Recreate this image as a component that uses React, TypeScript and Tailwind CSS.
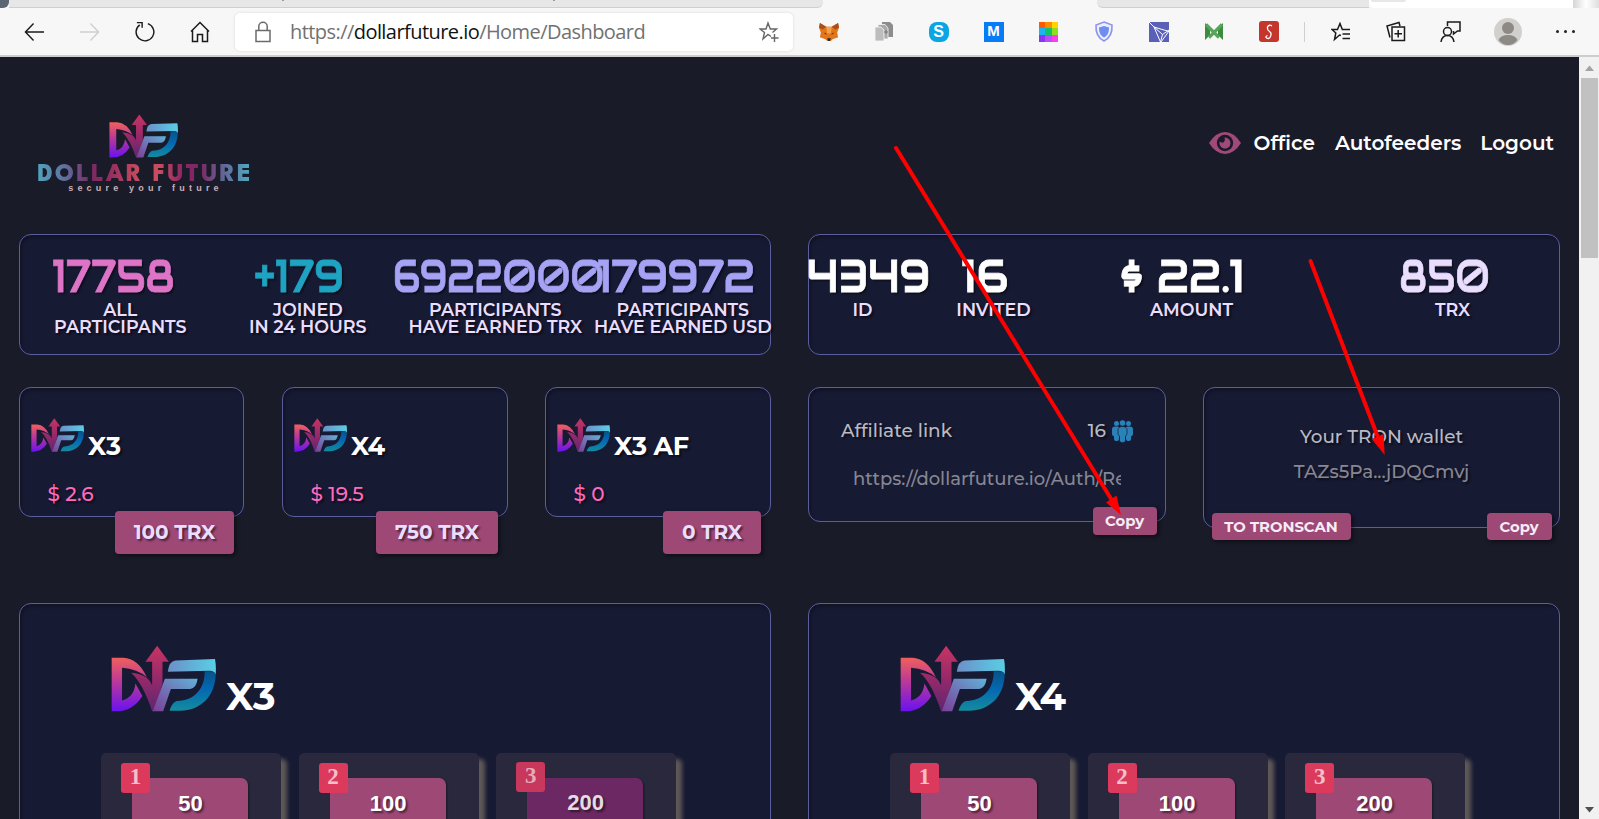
import { useId, type ReactNode } from "react";

const font = "font-['Montserrat','Inter',sans-serif]";
const shadow = "[text-shadow:2px_2px_2px_rgba(0,0,0,0.5)]";
const panel =
  "relative rounded-xl border border-[#5b5e9d] bg-[#171a33] shadow-[inset_2px_3px_3px_rgba(0,0,0,0.25)]";

function Mark({ className }: { className: string }) {
  const id = useId().replace(/:/g, "");
  return (
    <svg viewBox="333 166 314 200" preserveAspectRatio="none" className={className}>
      <defs>
        <linearGradient id={id + "d"} x1="0" y1="0" x2="0" y2="1">
          <stop offset="0" stopColor="#f0605c" />
          <stop offset="0.4" stopColor="#c03c92" />
          <stop offset="1" stopColor="#6a12f0" />
        </linearGradient>
        <linearGradient id={id + "n"} x1="0" y1="0" x2="0" y2="1">
          <stop offset="0" stopColor="#c83462" />
          <stop offset="0.5" stopColor="#96296a" />
          <stop offset="1" stopColor="#5e2670" />
        </linearGradient>
        <linearGradient id={id + "f"} x1="0" y1="1" x2="1" y2="0">
          <stop offset="0" stopColor="#7a3f96" />
          <stop offset="0.45" stopColor="#7270b4" />
          <stop offset="1" stopColor="#5fb2d8" />
        </linearGradient>
        <linearGradient id={id + "t"} x1="0" y1="0" x2="1" y2="0">
          <stop offset="0" stopColor="#6d8fc8" />
          <stop offset="1" stopColor="#58cfe6" />
        </linearGradient>
        <linearGradient id={id + "b"} x1="0" y1="0" x2="0" y2="1">
          <stop offset="0" stopColor="#075288" />
          <stop offset="0.45" stopColor="#0468b2" />
          <stop offset="1" stopColor="#148c9e" />
        </linearGradient>
      </defs>
      <path
        fill={`url(#${id}d)`}
        d="M335 204H370Q414 206 440 262Q412 238 366 234V332Q402 322 406 281L427 318Q398 364 348 364H335Z"
      />
      <path
        fill={`url(#${id}n)`}
        d="M393 249Q420 250 440 264Q450 272 456 286V216H436L471 168L506 216H487V282L462 364H456Q428 280 393 249Z"
      />
      <path fill={`url(#${id}f)`} d="M494 267H592Q588 296 570 297H512L489 364H458Z" />
      <path fill={`url(#${id}t)`} d="M503 246Q506 214 526 212L644 208Q648 228 646 254Q640 243 628 243Z" />
      <path
        fill={`url(#${id}b)`}
        d="M613 244H636Q645 246 646 254C644 320 600 362 540 362H508Q516 336 530 333C586 332 614 292 613 244Z"
      />
    </svg>
  );
}

function Stat({
  value,
  valueClass,
  scale,
  width,
  children,
}: {
  value: string;
  valueClass: string;
  scale: string;
  width: string;
  children: ReactNode;
}) {
  return (
    <div className={`${width} shrink-0 whitespace-nowrap font-semibold`}>
      <div
        className={`flex h-[41px] items-center pb-[2px] font-['Audiowide','Orbitron','Inter',sans-serif] text-[45px] leading-[39px] font-normal [-webkit-text-stroke:0.8px_currentColor] ${shadow} ${valueClass}`}
      >
        <span className={`inline-block ${scale}`}>{value}</span>
      </div>
      <div
        className={`flex flex-col items-center pt-[3px] pl-[13px] text-[17.5px] leading-[17px] text-[#eadeff] ${shadow}`}
      >
        {children}
      </div>
    </div>
  );
}

function Program({
  title,
  amount,
  trx,
  className,
  btn,
}: {
  title: string;
  amount: string;
  trx: string;
  className: string;
  btn: string;
}) {
  return (
    <div className={`${panel} h-[130px] ${className}`}>
      <div className="flex pt-[30px] pl-[11px]">
        <Mark className="h-[34px] w-[53px]" />
        <div className={`mt-[11px] ml-[4px] text-[25.5px] leading-[34px] font-bold tracking-[-0.3px] text-white ${shadow}`}>
          {title}
        </div>
      </div>
      <div className={`mt-[19px] pl-[27.5px] text-[20px] leading-[24px] font-medium text-[#ff69c0] ${shadow}`}>
        {amount}
      </div>
      <div
        className={`absolute top-[123px] flex h-[43px] items-center justify-center rounded-[4px] bg-[#9e4876] pb-[2px] text-[20px] font-bold text-[#eadeff] shadow-[2px_2px_4px_rgba(0,0,0,0.5)] ${shadow} ${btn}`}
      >
        {trx}
      </div>
    </div>
  );
}

function SmallButton({ className, children }: { className: string; children: ReactNode }) {
  return (
    <div
      className={`absolute flex items-center justify-center rounded-[4px] bg-[#9e4876] pr-px text-[14.8px] font-bold whitespace-nowrap text-[#f6ecf4] shadow-[2px_2px_4px_rgba(0,0,0,0.5)] ${className}`}
    >
      {children}
    </div>
  );
}

function Level({ n, price, dim }: { n: number; price: number; dim?: boolean }) {
  return (
    <div className="relative h-[120px] w-[180px] rounded-[5px] bg-[#29283d] pt-[25px] pl-[31px] shadow-[6px_6px_4px_#5e5957]">
      <div
        className={`h-[90px] w-[116px] rounded-[7px] pl-px text-center font-['Liberation_Sans',Arial,sans-serif] text-[22px] font-bold shadow-[1px_1px_2px_rgba(0,0,0,0.4)] ${shadow} ${
          dim ? "bg-[#6b2862] pt-[8px] leading-[33px] text-[#e2dde2]" : "bg-[#9e4876] pt-[9px] leading-[33px] text-white"
        }`}
      >
        {price}
      </div>
      <div
        className={`absolute left-[20px] flex h-[30px] w-[29px] items-center justify-center rounded-[3px] pb-px font-['Liberation_Serif','Times_New_Roman',serif] text-[23px] font-bold ${
          dim ? "top-[9px] bg-[#c7385c] text-[#e5aab8]" : "top-[10px] bg-[#dc3a5c] text-[#f3c0ca]"
        }`}
      >
        {n}
      </div>
    </div>
  );
}

function Matrix({ title, dimLast, className = "" }: { title: string; dimLast?: boolean; className?: string }) {
  return (
    <div className={`${panel} h-[300px] w-[752px] ${className}`}>
      <div className="flex pt-[41px] pl-[91px]">
        <Mark className="h-[67px] w-[105px]" />
        <div className="mt-[24px] ml-[10px] text-[38.5px] leading-[56px] font-bold tracking-[-0.8px] text-white">{title}</div>
      </div>
      <div className="mt-[28px] flex gap-[17.6px] pl-[81px]">
        <Level n={1} price={50} />
        <Level n={2} price={100} />
        <Level n={3} price={200} dim={dimLast} />
      </div>
    </div>
  );
}

function Slot({ children, className = "w-[55px]" }: { children: ReactNode; className?: string }) {
  return <div className={`flex h-full shrink-0 items-center justify-center ${className}`}>{children}</div>;
}

function BrowserBar() {
  return (
    <div className="h-[57px]">
      <div className="flex h-2 bg-[#f7f7f7]">
        <div className="w-[9px] rounded-br-[6px] bg-[#5c6573]" />
        <div className="flex w-[814px] justify-between rounded-br-[6px] border-b border-[#cfcfcf] bg-[#e7e7e7] pr-[268px] pl-[273px]">
          <div className="h-px w-[2px] bg-[#999]" />
          <div className="h-px w-[2px] bg-[#999]" />
        </div>
        <div className="w-[274px]" />
        <div className="w-[272px] rounded-bl-[6px] border-b border-[#cfcfcf] bg-[#e7e7e7]" />
        <div className="w-[204px] rounded-bl-[6px] bg-white pl-[2px]">
          <div className="h-[2px] w-[35px] rounded-b-[2px] bg-[#e7e7e7]" />
        </div>
        <div className="flex-1 bg-gradient-to-r from-[#d5d5d5] via-white to-[#dedede]" />
      </div>
      <div className="flex h-[49px] items-center border-b-2 border-[#cdcdcd] bg-[#f7f7f7]">
        <Slot className="ml-[7px] w-[55px]">
          <svg width="21" height="20" viewBox="0 0 22 20" fill="none" stroke="#1b1b1b" strokeWidth="1.5">
            <path d="M21 10H1.5M10 1L1.5 10L10 19" />
          </svg>
        </Slot>
        <Slot>
          <svg width="21" height="20" viewBox="0 0 22 20" fill="none" stroke="#cfcfcf" strokeWidth="1.5">
            <path d="M1 10H20.5M12 1L20.5 10L12 19" />
          </svg>
        </Slot>
        <Slot>
          <svg width="21" height="22" viewBox="0 0 22 22" fill="none" stroke="#1b1b1b" strokeWidth="1.5">
            <path d="M14.5 2.2A9.3 9.3 0 1 1 6 3.5M3 1.2H8.5V6.5" />
          </svg>
        </Slot>
        <Slot>
          <svg width="20" height="22" viewBox="0 0 20 22" fill="none" stroke="#1b1b1b" strokeWidth="1.5">
            <path d="M1 10.5L10 1.5L19 10.5M2.5 9.5V20.5H7.5V13.5H12.5V20.5H17.5V9.5" />
          </svg>
        </Slot>
        <div className="ml-[8px] flex h-[38px] w-[558px] shrink-0 items-center rounded-[5px] bg-white pr-[14px] pl-[20px] shadow-[0_0_3px_rgba(0,0,0,0.12)]">
          <svg width="16" height="22" viewBox="0 0 16 22" fill="none" stroke="#6b6b6b" strokeWidth="1.5">
            <path d="M1 9.5H15V20.5H1ZM3.8 9.5V5.5A4.2 4.2 0 0 1 12.2 5.5V9.5" />
          </svg>
          <div className="ml-[19px] font-['Segoe_UI','Open_Sans',sans-serif] text-[20px] tracking-[-0.56px] whitespace-nowrap text-[#717171]">
            https://<span className="text-[#111]">dollarfuture.io</span>/Home/Dashboard
          </div>
          <svg className="ml-auto" width="20" height="22" viewBox="0 0 20 22" fill="none" stroke="#666" strokeWidth="1.4">
            <path d="M12 15.5L9 13.5L4 18L5.5 11.5L1 8H7L9 2L11.3 8H17.5L13.5 11.5M15.5 13V21M12 17H19.5" />
          </svg>
        </div>
        <Slot className="ml-[8px] w-[55px]">
          <svg width="20" height="20" viewBox="0 0 22 21" preserveAspectRatio="none">
            <path fill="#e2761b" d="M1 1L8 5H14L21 1L22 6L20 11L21 16L15 18L13 20H9L7 18L1 16L2 11L0 6Z" />
            <path fill="#a8501a" d="M1 1L8 5L4 8L0 6ZM21 1L14 5L18 8L22 6Z" />
            <path fill="#f6a04c" d="M8 5H14L13 12H9Z" />
            <path fill="#1f2a35" d="M5 11L8 12L8 13.5ZM17 11L14 12V13.5ZM9 17H13L12 20H10Z" />
          </svg>
        </Slot>
        <Slot>
          <svg width="20" height="21" viewBox="0 0 20 21">
            <path fill="#8d8d8d" d="M8 1H16L19 4V16H8Z" />
            <path fill="#a9a9a9" stroke="#f7f7f7" strokeWidth=".8" d="M4 3.5H11L14 7V18H4Z" />
            <path fill="#bdbdbd" stroke="#f7f7f7" strokeWidth=".8" d="M1 6H7L10 9V20H1Z" />
            <path stroke="#777" d="M10 11H14M12 9V13" />
          </svg>
        </Slot>
        <Slot>
          <div className="flex h-[20px] w-[20px] items-center justify-center rounded-[8px] bg-[#0aa5e4] font-['Liberation_Sans',sans-serif] text-[16px] font-bold text-white">
            S
          </div>
        </Slot>
        <Slot>
          <div className="flex h-[20px] w-[20px] items-center justify-center bg-[#067df7] font-['Liberation_Sans',sans-serif] text-[15px] font-bold text-white">
            M
          </div>
        </Slot>
        <Slot>
          <div className="grid h-[20px] w-[20px] grid-cols-3">
            <i className="bg-[#ff5a00]" />
            <i className="bg-[#ff8c00]" />
            <i className="bg-[#ffd200]" />
            <i className="bg-[#1fb4f0]" />
            <i className="bg-[#10c268]" />
            <i className="bg-[#8fe01c]" />
            <i className="bg-[#8a35f5]" />
            <i className="bg-[#b84cf5]" />
            <i className="bg-[#f93fe8]" />
          </div>
        </Slot>
        <Slot>
          <svg width="20" height="21" viewBox="0 0 20 21">
            <path d="M10 1L18 4C18.5 12 16 17 10 20C4 17 1.5 12 2 4Z" fill="#eef" stroke="#8f93f0" strokeWidth="1.6" />
            <path d="M10 5L15 6.5C15 12 13.5 14.5 10 16.5C6.5 14.5 5 12 5 6.5Z" fill="#6d8eee" />
          </svg>
        </Slot>
        <Slot>
          <svg width="20" height="20" viewBox="0 0 20 20">
            <path fill="#5a60b8" d="M0 0H20V20H0Z" />
            <path d="M5 5L20 9.5M5 5L11.5 20M5 5L13.5 12.5L20 8M13.5 12.5L11.5 20M0 0L5 5M20 9L12 20" fill="none" stroke="#fff" strokeWidth="1" />
          </svg>
        </Slot>
        <Slot>
          <svg width="18" height="17" viewBox="0 0 18 17">
            <path fill="#3d8b40" d="M0 0L5 5V12L0 17ZM18 0L13 5V12L18 17Z" />
            <path d="M1 1.5L14 14.5M17 1.5L4 14.5" fill="none" stroke="#58a55a" strokeWidth="3.2" />
          </svg>
        </Slot>
        <Slot>
          <div className="flex h-[21px] w-[20px] items-center justify-center rounded-[3px] bg-[#c4352b]">
            <svg width="10" height="16" viewBox="0 0 10 16" fill="none" stroke="#fff" strokeWidth="1.3">
              <path d="M8 2Q5 0 3.5 3Q3 6 5.5 7.5Q8 9 6.5 12.5Q5 15.5 2.5 14Q1 12.5 3.5 11.5" />
            </svg>
          </div>
        </Slot>
        <Slot className="w-[17px]">
          <div className="h-[20px] w-px bg-[#cfcfcf]" />
        </Slot>
        <Slot>
          <svg width="20" height="20" viewBox="0 0 20 20" fill="none" stroke="#1b1b1b" strokeWidth="1.5">
            <path d="M10 13.5L8.5 13L3.5 17.5L4.8 11L1 7.5H6.5L9 1.5L11.3 7.5H19M11.5 12H19M11.5 16.5H19" />
          </svg>
        </Slot>
        <Slot>
          <svg width="20" height="21" viewBox="0 0 20 21" fill="none" stroke="#1b1b1b" strokeWidth="1.5">
            <path d="M6 6H18.5V19.5H6ZM12.2 9V16.5M8.5 12.7H16M4 16.5L1 5L13 1.5L14 5" />
          </svg>
        </Slot>
        <Slot>
          <svg width="21" height="22" viewBox="0 0 21 22" fill="none" stroke="#1b1b1b" strokeWidth="1.5">
            <path d="M7.5 5V1H20V10H17.5L13.5 13V10" />
            <circle cx="7.5" cy="10.5" r="4" />
            <path d="M1 21Q2 14.5 7.5 14.5Q13 14.5 14 21" />
          </svg>
        </Slot>
        <Slot className="w-[60px]">
          <svg width="28" height="28" viewBox="0 0 28 28">
            <circle cx="14" cy="14" r="14" fill="#d2d0cc" />
            <circle cx="14" cy="10" r="6" fill="#8d8985" />
            <path fill="#8d8985" d="M4.5 22Q7 17 14 17Q21 17 23.5 22Q20 27 14 27Q8 27 4.5 22Z" />
          </svg>
        </Slot>
        <Slot>
          <div className="flex gap-[5px]">
            <i className="h-[3px] w-[3px] rounded-full bg-[#222]" />
            <i className="h-[3px] w-[3px] rounded-full bg-[#222]" />
            <i className="h-[3px] w-[3px] rounded-full bg-[#222]" />
          </div>
        </Slot>
      </div>
    </div>
  );
}

export default function App() {
  return (
    <div className={`relative h-[819px] w-[1599px] overflow-hidden bg-[#1a1b29] ${font}`}>
      <BrowserBar />
      <div className="flex h-[762px]">
        <div className="h-full w-[1579px] overflow-hidden">
          <header className="flex h-[177px] items-start justify-between pr-[25px] pl-[37px]">
            <div className="flex w-[214px] flex-col items-center pt-[57px]">
              <Mark className="-ml-px h-[44px] w-[69px]" />
              <div className="mt-[5px] bg-clip-text pl-[2px] font-['League_Spartan','Lato',sans-serif] text-[25.5px] leading-[24px] font-extrabold tracking-[2.1px] whitespace-nowrap text-transparent [background-image:linear-gradient(90deg,#4fa8c0_0%,#5f6f9d_14%,#7a2a64_25%,#8a2a60_32%,#c94c5e_48%,#c94c5e_57%,#8a2463_68%,#7a2a64_76%,#5f6f9d_88%,#4fa8c0_98%)]">
                DOLLAR FUTURE
              </div>
              <div className="-mt-[4px] pl-[3px] font-['Liberation_Sans',sans-serif] text-[9px] leading-[10px] font-bold tracking-[4.2px] whitespace-nowrap text-[#c9b0b8]">
                secure your future
              </div>
            </div>
            <nav className="flex items-center pt-[72px] text-[20px] leading-[28px] font-semibold text-white">
              <svg width="32" height="22" viewBox="0 0 32 22">
                <path fill="#a14a79" d="M0 11Q7 0 16 0Q25 0 32 11Q25 22 16 22Q7 22 0 11Z" />
                <circle cx="16" cy="11" r="8.2" fill="#1a1b29" />
                <path fill="#a14a79" d="M15.5 5.5A5.5 5.5 0 1 1 10.7 9.5Q13 11.5 15 10Q16.5 8 15.5 5.5Z" />
              </svg>
              <span className="ml-[12.5px]">Office</span>
              <span className="ml-[20px]">Autofeeders</span>
              <span className="ml-[19px]">Logout</span>
            </nav>
          </header>

          <section className="flex gap-[37px] pl-[19px]">
            <div className={`${panel} flex h-[121px] w-[752px] pt-[22px]`}>
              <Stat width="w-[187.5px]" value="17758" scale="scale-x-[0.87]" valueClass="justify-center text-[#de74c7]">
                <span>ALL</span>
                <span>PARTICIPANTS</span>
              </Stat>
              <Stat width="w-[187.5px]" value="+179" scale="scale-x-[0.88]" valueClass="justify-center pr-[4px] text-[#1fa3c2]">
                <span>JOINED</span>
                <span>IN 24 HOURS</span>
              </Stat>
              <Stat width="w-[187.5px]" value="6922000" scale="scale-x-[0.815] origin-left -ml-[2px]" valueClass="text-[#a6a3f5]">
                <span>PARTICIPANTS</span>
                <span>HAVE EARNED TRX</span>
              </Stat>
              <Stat width="w-[187.5px]" value="179972" scale="scale-x-[0.92] origin-left" valueClass="pl-[14px] tracking-[-0.5px] text-[#a6a3f5]">
                <span>PARTICIPANTS</span>
                <span>HAVE EARNED USD</span>
              </Stat>
            </div>
            <div className={`${panel} flex h-[121px] w-[752px] pt-[22px]`}>
              <Stat width="w-[94px]" value="4349" scale="scale-x-[0.91] origin-left -ml-[2px]" valueClass="text-white">
                <span>ID</span>
              </Stat>
              <Stat width="w-[168px]" value="16" scale="scale-x-[0.95]" valueClass="justify-center pr-[4px] text-white">
                <span>INVITED</span>
              </Stat>
              <Stat width="w-[228px]" value="$ 22.1" scale="scale-x-[0.95]" valueClass="justify-center pr-[5px] text-white">
                <span>AMOUNT</span>
              </Stat>
              <Stat width="ml-auto w-[226px]" value="850" scale="scale-x-[0.83]" valueClass="justify-center pr-[3px] text-[#eadeff]">
                <span>TRX</span>
              </Stat>
            </div>
          </section>

          <section className="mt-[32px] flex h-[216px] items-start pl-[19px]">
            <Program title="X3" amount="$ 2.6" trx="100 TRX" className="w-[225px]" btn="right-[9px] w-[119px]" />
            <Program title="X4" amount="$ 19.5" trx="750 TRX" className="ml-[38px] w-[226px]" btn="right-[9px] w-[122px]" />
            <Program title="X3 AF" amount="$ 0" trx="0 TRX" className="ml-[37px] w-[226px]" btn="right-[9px] w-[98px]" />
            <div className={`${panel} ml-[37px] h-[135px] w-[358px] pr-[32px] pl-[32px]`}>
              <div
                className={`flex items-center pt-[30px] text-[18.5px] leading-[26px] font-medium text-[#b9bac3] ${shadow}`}
              >
                <span>Affiliate link</span>
                <span className="ml-auto">16</span>
                <svg className="ml-[6px]" width="21" height="23" viewBox="0 0 21 23" fill="#2a83b8">
                  <circle cx="4.5" cy="3.5" r="2.5" />
                  <circle cx="16.5" cy="3.5" r="2.5" />
                  <rect x="0" y="6.5" width="8" height="10" rx="3" />
                  <rect x="13" y="6.5" width="8" height="10" rx="3" />
                  <rect x="2" y="8" width="5" height="13" rx="2" />
                  <rect x="14" y="8" width="5" height="13" rx="2" />
                  <g stroke="#171a33" strokeWidth=".7">
                    <circle cx="10.5" cy="3" r="3.2" />
                    <path d="M6 10Q6 6.5 10.5 6.5Q15 6.5 15 10V14L13.5 16.5V21Q12 23 10.5 22.7Q9 23 7.5 21V16.5L6 14Z" />
                  </g>
                </svg>
              </div>
              <div className="mt-[20px] ml-[12px] w-[268px] overflow-hidden text-[18px] leading-[30px] font-medium whitespace-nowrap text-[#868792]">
                https://dollarfuture.io/Auth/Register
              </div>
              <SmallButton className="top-[119px] right-[8px] h-[28px] w-[64px] pt-px">Copy</SmallButton>
            </div>
            <div className={`${panel} ml-[37px] h-[141px] w-[357px] text-center text-[18.4px] font-medium`}>
              <div className={`pt-[35px] leading-[28px] text-[#b9bac3] ${shadow}`}>Your TRON wallet</div>
              <div className={`mt-[7px] leading-[28px] text-[#868792] ${shadow}`}>TAZs5Pa...jDQCmvj</div>
              <SmallButton className="top-[125px] left-[8px] h-[27px] w-[139px] pt-px">TO TRONSCAN</SmallButton>
              <SmallButton className="top-[125px] right-[7px] h-[27px] w-[65px] pt-px">Copy</SmallButton>
            </div>
          </section>

          <section className="flex gap-[37px] pl-[19px]">
            <Matrix title="X3" dimLast />
            <Matrix title="X4" />
          </section>
        </div>
        <div className="flex w-[20px] flex-col items-center bg-[#f1f1f1]">
          <svg width="20" height="21" viewBox="0 0 20 21" fill="#a3a3a3">
            <path d="M6 14L10.5 8.5L15 14Z" />
          </svg>
          <div className="ml-px h-[180px] w-[17px] bg-[#c1c1c1]" />
          <svg className="mt-auto" width="20" height="18" viewBox="0 0 20 18" fill="#505050">
            <path d="M6 6L10.5 11.5L15 6Z" />
          </svg>
        </div>
      </div>

      <svg className="absolute inset-0" width="1599" height="819" viewBox="0 0 1599 819">
        <g stroke="#fe0000" strokeWidth="4" strokeLinecap="round">
          <path d="M896 148L1113 502" />
          <path d="M1310.5 261L1379 440" />
        </g>
        <g fill="#fe0000">
          <path d="M1121 515L1106 502.5L1116.5 495.5Z" />
          <path d="M1384.7 455L1371.7 439L1383.5 434Z" />
        </g>
      </svg>
    </div>
  );
}
